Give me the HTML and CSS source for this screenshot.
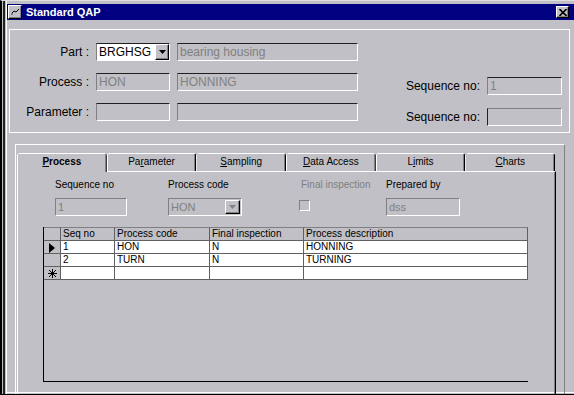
FILE: index.html
```html
<!DOCTYPE html>
<html lang="en">
<head>
    <meta charset="UTF-8">
    <title>Standard QAP</title>
    <link rel="stylesheet" href="styles.css">
</head>
<body>
    <div class="window">
        <div class="titlebar">
            <span class="sys-icon">
                <svg width="10" height="8" viewBox="0 0 10 8">
                    <path d="M1 6 L4 3 L6 4 L9 1" stroke="#000" stroke-width="1" fill="none"/>
                    <rect x="1" y="5" width="2" height="2" fill="#808080"/>
                </svg>
            </span>
            <span class="title">Standard QAP</span>
            <span class="close-btn">
                <svg width="8" height="7" viewBox="0 0 8 7">
                    <path d="M0.5 0 L7.5 7 M7.5 0 L0.5 7" stroke="#000" stroke-width="1.6"/>
                </svg>
            </span>
        </div>

        <div class="client">
            <div class="header-group">
                <div class="header-fields">
                    <label class="field-label">Part :</label>
                    <div class="combo">
                        <span class="combo-text">BRGHSG</span>
                        <span class="drop-btn"><svg width="7" height="4" viewBox="0 0 7 4"><path d="M0 0 H7 L3.5 4 Z" fill="#000"/></svg></span>
                    </div>
                    <div class="box">bearing housing</div>

                    <label class="field-label">Process :</label>
                    <div class="box">HON</div>
                    <div class="box">HONNING</div>

                    <label class="field-label">Parameter :</label>
                    <div class="box"></div>
                    <div class="box"></div>
                </div>

                <div class="seq-fields">
                    <label class="field-label">Sequence no:</label>
                    <div class="box">1</div>
                    <label class="field-label">Sequence no:</label>
                    <div class="box box-flat"></div>
                </div>
            </div>

            <div class="tab-frame">
                <div class="tabs">
                    <div class="tab active"><u>P</u>rocess</div>
                    <div class="tab">Pa<u>r</u>ameter</div>
                    <div class="tab"><u>S</u>ampling</div>
                    <div class="tab"><u>D</u>ata Access</div>
                    <div class="tab">L<u>i</u>mits</div>
                    <div class="tab"><u>C</u>harts</div>
                </div>

                <div class="tab-panel">
                    <div class="detail-fields">
                        <span class="small-label">Sequence no</span>
                        <span class="small-label">Process code</span>
                        <span class="small-label disabled">Final inspection</span>
                        <span class="small-label">Prepared by</span>

                        <div class="box small-box">1</div>
                        <div class="combo combo-disabled">
                            <span class="combo-text">HON</span>
                            <span class="drop-btn"><svg width="7" height="4" viewBox="0 0 7 4"><path d="M0 0 H7 L3.5 4 Z" fill="#808080"/></svg></span>
                        </div>
                        <div><span class="checkbox"></span></div>
                        <div class="box small-box">dss</div>
                    </div>

                    <div class="datasheet">
                        <table>
                            <colgroup>
                                <col class="col-sel">
                                <col class="col-seq">
                                <col class="col-code">
                                <col class="col-final">
                                <col class="col-desc">
                            </colgroup>
                            <thead>
                                <tr>
                                    <th></th>
                                    <th>Seq no</th>
                                    <th>Process code</th>
                                    <th>Final inspection</th>
                                    <th>Process description</th>
                                </tr>
                            </thead>
                            <tbody>
                                <tr>
                                    <td class="sel"><svg width="6" height="10" viewBox="0 0 6 10"><path d="M0 0 L6 5 L0 10 Z" fill="#000"/></svg></td>
                                    <td>1</td>
                                    <td>HON</td>
                                    <td>N</td>
                                    <td>HONNING</td>
                                </tr>
                                <tr>
                                    <td class="sel"></td>
                                    <td>2</td>
                                    <td>TURN</td>
                                    <td>N</td>
                                    <td>TURNING</td>
                                </tr>
                                <tr>
                                    <td class="sel"><svg width="9" height="9" viewBox="0 0 9 9"><path d="M4.5 0 V9 M0 4.5 H9 M1 1 L8 8 M8 1 L1 8" stroke="#000" stroke-width="1"/></svg></td>
                                    <td></td>
                                    <td></td>
                                    <td></td>
                                    <td></td>
                                </tr>
                            </tbody>
                        </table>
                    </div>
                </div>
            </div>
        </div>
    </div>
</body>
</html>
```

FILE: styles.css
```css
* {
    margin: 0;
    padding: 0;
    box-sizing: border-box;
}

body {
    background-color: #c0c0c6;
    font-family: "Liberation Sans", Arial, sans-serif;
    width: 574px;
    height: 395px;
    overflow: hidden;
}

.window {
    width: 574px;
    height: 395px;
    overflow: hidden;
    background-color: #c0c0c6;
    border-left: 2px solid #000;
    border-top: 1px solid #dfdfdf;
    border-bottom: 1px solid #000;
    padding: 3px 0 0 5px;
    box-shadow: inset 1px 0 #c0c0c0, inset 3px 0 #202020, inset 4px 0 #c0c0c0, inset 5px 0 #fff,
                inset 0 -1px #c0c0c6, inset 0 -2px #fff;
}

/* title bar */
.titlebar {
    height: 16px;
    background-color: #000080;
    display: flex;
    align-items: center;
    padding: 0 5px 0 1px;
}

.sys-icon,
.close-btn,
.drop-btn {
    display: flex;
    align-items: center;
    justify-content: center;
    background-color: #c0c0c6;
    border: 1px solid;
    border-color: #fff #000 #000 #fff;
    box-shadow: inset -1px -1px #808080;
}

.sys-icon {
    width: 14px;
    height: 14px;
}

.title {
    margin-left: 4px;
    color: #fff;
    font-weight: bold;
    font-size: 11px;
    flex: 1;
}

.close-btn {
    width: 13px;
    height: 12px;
}

/* top group */
.client {
    padding-left: 2px;
}

.header-group {
    margin-top: 9px;
    width: 561px;
    height: 104px;
    border: 1px solid #fff;
    display: flex;
}

.header-fields {
    display: grid;
    grid-template-columns: 79px 74px 181px;
    grid-auto-rows: 18px;
    column-gap: 7px;
    row-gap: 12px;
    padding-top: 13px;
}

.seq-fields {
    margin-left: auto;
    margin-right: 7px;
    display: grid;
    grid-template-columns: auto 75px;
    grid-auto-rows: 18px;
    column-gap: 7px;
    row-gap: 13px;
    padding-top: 47px;
    align-content: start;
}

.field-label {
    font-size: 12px;
    line-height: 18px;
    text-align: right;
    color: #000;
    white-space: nowrap;
}

.box {
    border: 1px solid;
    border-color: #202020 #fff #fff #808080;
    font-size: 12px;
    line-height: 16px;
    color: #808080;
    padding: 0 2px;
    white-space: nowrap;
    overflow: hidden;
}

.box-flat {
    border-color: #808080 #fff #fff #202020;
}

.combo {
    display: flex;
    background-color: #fff;
    border: 1px solid;
    border-color: #202020 #fff #fff #808080;
}

.combo-text {
    flex: 1;
    font-size: 12px;
    line-height: 16px;
    padding-left: 2px;
    color: #000;
}

.drop-btn {
    width: 14px;
    height: 16px;
}

.combo-disabled {
    background-color: transparent;
    border-color: #808080 #fff #fff #808080;
}

.combo-disabled .combo-text {
    color: #808080;
    font-size: 11px;
}

.combo-disabled .drop-btn {
    width: 15px;
    height: 14px;
    margin: 1px 1px 0 0;
}

/* tabs */
.tab-frame {
    margin: 11px 0 0 6px;
    width: 550px;
    height: 260px;
    border-top: 1px solid #fff;
    border-left: 1px solid #fff;
    border-right: 1px solid #808080;
    padding: 8px 0 0 1px;
}

.tabs {
    display: flex;
    width: 538px;
    height: 18px;
}

.tab {
    flex: 1;
    height: 18px;
    border-top: 1px solid #fff;
    border-left: 1px solid #fff;
    border-right: 1px solid #000;
    box-shadow: inset -1px 0 #808080;
    font-size: 10px;
    line-height: 16px;
    text-align: center;
    color: #000;
    background-color: #c0c0c6;
    clip-path: polygon(2px 0, calc(100% - 2px) 0, 100% 2px, 100% 100%, 0 100%, 0 2px);
}

.tab.active {
    font-weight: bold;
    height: 19px;
    position: relative;
    z-index: 1;
}

.tab-panel {
    width: 539px;
    height: 230px;
    border-top: 1px solid #fff;
    border-left: 1px solid #fff;
    border-right: 1px solid #000;
    box-shadow: inset -1px 0 #808080;
}

.detail-fields {
    margin: 6px 0 0 37px;
    display: grid;
    grid-template-columns: 113px 131px 87px 74px;
    grid-template-rows: 13px 18px;
    row-gap: 7px;
}

.small-label {
    font-size: 10px;
    line-height: 13px;
    color: #000;
}

.small-label.disabled {
    color: #808080;
    padding-left: 2px;
}

.small-box {
    width: 72px;
    font-size: 11px;
    border-color: #808080 #fff #fff #808080;
}

.detail-fields .combo {
    width: 74px;
}

.detail-fields .small-box:last-child {
    width: 74px;
}

.checkbox {
    display: block;
    width: 11px;
    height: 11px;
    margin-top: 2px;
    border: 1px solid;
    border-color: #808080 #fff #fff #808080;
}

/* datasheet */
.datasheet {
    margin: 11px 0 0 25px;
    width: 485px;
    height: 155px;
    border-left: 1px solid #000;
    border-bottom: 1px solid #000;
}

table {
    table-layout: fixed;
    border-collapse: separate;
    border-spacing: 0;
    width: 484px;
    font-size: 10px;
}

.col-sel { width: 17px; }
.col-seq { width: 54px; }
.col-code { width: 95px; }
.col-final { width: 94px; }
.col-desc { width: 224px; }

th,
td {
    border-right: 1px solid #606060;
    border-bottom: 1px solid #606060;
    line-height: 12px;
    height: 13px;
    padding: 0 2px;
    text-align: left;
    font-weight: normal;
    white-space: nowrap;
    overflow: hidden;
}

th {
    border-top: 1px solid #808080;
    height: 14px;
}

td {
    background-color: #fff;
}

td.sel {
    background-color: #c0c0c6;
    padding: 0;
    text-align: center;
}

td.sel svg {
    display: block;
    margin: 1px auto 0;
}
```
